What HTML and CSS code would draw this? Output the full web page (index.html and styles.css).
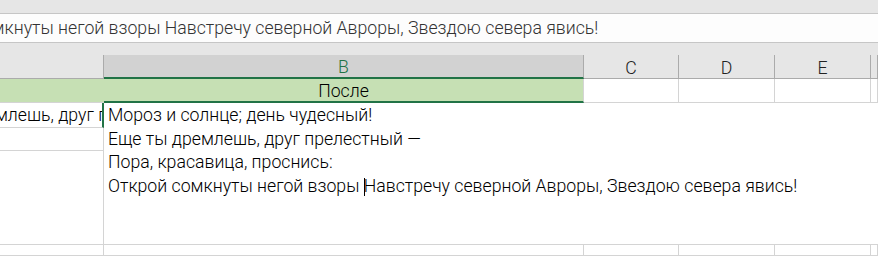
FILE: index.html
```html
<!DOCTYPE html>
<html lang="ru">
<head>
  <meta charset="UTF-8" />
  <meta name="viewport" content="width=device-width, initial-scale=1.0" />
  <title>Книга1 - Лист1</title>
  <link rel="stylesheet" href="styles.css">
</head>
<body>
  <div class="topbar"></div>

  <div class="formula-bar">
    <span class="formula-text">Открой сомкнуты негой взоры Навстречу северной Авроры, Звездою севера явись!</span>
  </div>

  <div class="band"></div>

  <div class="sheet">
    <!-- column headers -->
    <div class="col-head"></div>
    <div class="col-head active">B</div>
    <div class="col-head">C</div>
    <div class="col-head">D</div>
    <div class="col-head">E</div>
    <div class="col-head"></div>

    <!-- row 1 -->
    <div class="cell filled"></div>
    <div class="cell filled title">После</div>
    <div class="cell"></div>
    <div class="cell"></div>
    <div class="cell"></div>
    <div class="cell"></div>

    <!-- rows 2-4, column A -->
    <div class="col-a">
      <div class="cell a2"><span class="clip-text">Еще ты дремлешь, друг прелестный —</span></div>
      <div class="cell a3"></div>
      <div class="cell a4"></div>
    </div>

    <!-- B2 in edit mode -->
    <div class="editor">
      <div class="line">Мороз и солнце; день чудесный!</div>
      <div class="line">Еще ты дремлешь, друг прелестный —</div>
      <div class="line">Пора, красавица, проснись:</div>
      <div class="line">Открой сомкнуты негой взоры <span class="caret"></span>Навстречу северной Авроры, Звездою севера явись!</div>
    </div>

    <!-- row 5 -->
    <div class="cell last"></div>
    <div class="cell last"></div>
    <div class="cell last"></div>
    <div class="cell last"></div>
    <div class="cell last"></div>
    <div class="cell last"></div>
  </div>
</body>
</html>
```

FILE: styles.css
```css
:root {
  --chrome: #e6e6e6;
  --chrome-line: #c6c6c6;
  --head-line: #ababab;
  --grid: #d4d4d4;
  --green: #217346;
  --fill: #c6e0b4;
}

* {
  box-sizing: border-box;
  margin: 0;
  padding: 0;
}

body {
  width: 878px;
  height: 258px;
  overflow: hidden;
  background: #fff;
  color: #000;
  font-family: Roboto, 'Liberation Sans', sans-serif;
  font-size: 17.7px;
  font-weight: 300;
}

.topbar {
  height: 14px;
  background: var(--chrome);
  border-bottom: 1px solid var(--chrome-line);
}

/* formula bar */
.formula-bar {
  height: 29px;
  background: #fdfdfd;
  border-bottom: 1px solid var(--chrome-line);
  display: flex;
  align-items: center;
  overflow: hidden;
  white-space: nowrap;
}
.formula-text {
  margin-left: -91px;
  color: #333;
}

.band {
  height: 12px;
  background: var(--chrome);
}

/* grid */
.sheet {
  display: grid;
  grid-template-columns: 104px 480px 95px 96px 96px 1fr;
  grid-template-rows: 24px 24px 142px 1fr;
  height: 201px;
}

.col-head {
  background: var(--chrome);
  border-right: 1px solid var(--head-line);
  border-bottom: 1px solid var(--head-line);
  display: flex;
  align-items: center;
  justify-content: center;
  color: #222;
  padding-top: 2px;
}
.col-head.active {
  background: #d2d2d2;
  color: var(--green);
  border-bottom: 2px solid var(--green);
}

.cell {
  border-right: 1px solid var(--grid);
  border-bottom: 1px solid var(--grid);
  overflow: hidden;
  white-space: nowrap;
}
.cell.filled {
  background: var(--fill);
  border-right-color: var(--fill);
}
.cell.title {
  border-right-color: var(--grid);
  border-bottom: 2px solid var(--green);
  display: flex;
  align-items: center;
  justify-content: center;
  padding-top: 1px;
}

.col-a {
  display: flex;
  flex-direction: column;
}
.a2 {
  height: 25px;
  line-height: 24px;
  border-right: 2px solid var(--green);
}
.clip-text {
  display: inline-block;
  margin-left: -98px;
}
.a3 {
  height: 23px;
}
.a4 {
  flex: 1;
}

.editor {
  grid-column: 2 / 7;
  border-bottom: 1px solid var(--grid);
  padding-left: 4px;
  padding-top: 1px;
  line-height: 23.6px;
  white-space: nowrap;
  overflow: hidden;
}

.caret {
  display: inline-block;
  width: 1px;
  height: 18px;
  background: #000;
  vertical-align: -4px;
  margin-right: -1px;
}
```
